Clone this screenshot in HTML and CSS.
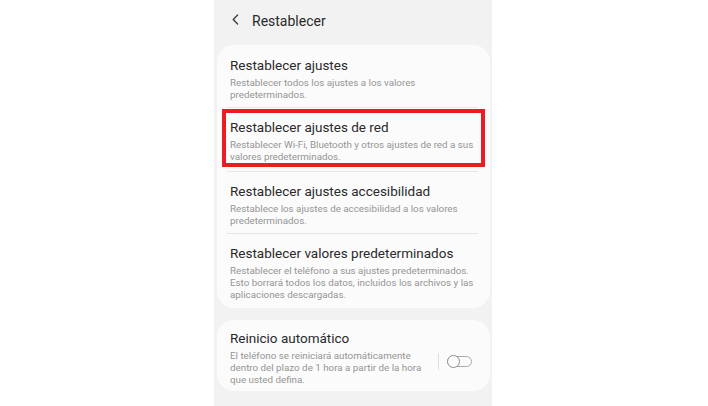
FILE: index.html
```html
<!DOCTYPE html>
<html lang="es">
<head>
<meta charset="utf-8">
<title>Restablecer</title>
<link rel="stylesheet" href="styles.css">
</head>
<body>
<div class="phone">
  <header class="topbar">
    <svg class="back" width="7" height="11" viewBox="0 0 7 11"><polyline points="5.6,1 1.2,5.5 5.6,10" fill="none" stroke="#3a3a3a" stroke-width="1.3" stroke-linecap="round" stroke-linejoin="round"/></svg>
    <span class="topbar-title">Restablecer</span>
  </header>

  <section class="card">
    <div class="item">
      <div class="item-title">Restablecer ajustes</div>
      <div class="item-sub">Restablecer todos los ajustes a los valores<br>predeterminados.</div>
    </div>
    <div class="item item-marked">
      <div class="item-title">Restablecer ajustes de red</div>
      <div class="item-sub">Restablecer Wi-Fi, Bluetooth y otros ajustes de red a sus<br>valores predeterminados.</div>
      <div class="highlight"></div>
    </div>
    <div class="item">
      <div class="item-title">Restablecer ajustes accesibilidad</div>
      <div class="item-sub">Restablece los ajustes de accesibilidad a los valores<br>predeterminados.</div>
    </div>
    <div class="item item-last">
      <div class="item-title">Restablecer valores predeterminados</div>
      <div class="item-sub">Restablecer el teléfono a sus ajustes predeterminados.<br>Esto borrará todos los datos, incluidos los archivos y las<br>aplicaciones descargadas.</div>
    </div>
  </section>

  <section class="card card-second">
    <div class="item item-switch">
      <div class="item-text">
        <div class="item-title">Reinicio automático</div>
        <div class="item-sub">El teléfono se reiniciará automáticamente<br>dentro del plazo de 1 hora a partir de la hora<br>que usted defina.</div>
      </div>
      <div class="switch-area">
        <span class="vsep"></span>
        <span class="toggle"><span class="knob"></span></span>
      </div>
    </div>
  </section>
</div>
</body>
</html>
```

FILE: styles.css
```css
html, body {
  margin: 0;
  padding: 0;
  background: #ffffff;
}
body {
  font-family: Roboto, "Noto Sans", "Liberation Sans", sans-serif;
  width: 708px;
  height: 406px;
  overflow: hidden;
}
.phone {
  margin-left: 214px;
  width: 278px;
  height: 406px;
  background: #f2f2f2;
  padding: 0 2px 0 3px;
  box-sizing: border-box;
}
.topbar {
  height: 45px;
  display: flex;
  align-items: center;
  padding-left: 15px;
  padding-bottom: 4px;
  box-sizing: border-box;
}
.back {
  margin-right: 13px;
  flex: none;
  margin-top: -2px;
}
.topbar-title {
  font-size: 14px;
  color: #2a2a2a;
  line-height: 20px;
}
.card {
  background: #fbfbfb;
  border-radius: 17px;
  padding: 0;
}
.card-second {
  margin-top: 12px;
}
.item {
  position: relative;
  padding: 10px 10px 6px 13px;
}
.item + .item::before {
  content: "";
  position: absolute;
  top: 0;
  left: 10px;
  right: 12px;
  height: 1px;
  background: #e6e6e6;
}
.item-marked {
  padding-bottom: 8px;
}
.item-last {
  padding-bottom: 7px;
}
.item-title {
  font-size: 13.5px;
  line-height: 20px;
  color: #2a2a2a;
  margin-bottom: 2px;
  white-space: nowrap;
}
.item-sub {
  font-size: 9.8px;
  line-height: 12px;
  color: #959595;
  white-space: nowrap;
}
.highlight {
  position: absolute;
  left: 5px;
  top: 2px;
  right: 5px;
  height: 58px;
  border: 4px solid #ec1c24;
  box-sizing: border-box;
}
.item-switch {
  display: flex;
  align-items: center;
  padding-top: 8px;
  padding-bottom: 5px;
}
.item-text {
  flex: 1;
}
.switch-area {
  display: flex;
  align-items: center;
  gap: 8px;
  margin-top: 8px;
  margin-right: 8px;
}
.vsep {
  width: 1px;
  height: 17px;
  background: #e0e0e0;
}
.toggle {
  position: relative;
  width: 25px;
  height: 11px;
  border: 1px solid #a9a9a9;
  border-radius: 7px;
  box-sizing: border-box;
}
.knob {
  position: absolute;
  left: -1px;
  top: -2px;
  width: 13px;
  height: 13px;
  border: 1px solid #8f8f8f;
  border-radius: 50%;
  background: #fbfbfb;
  box-sizing: border-box;
}
```
